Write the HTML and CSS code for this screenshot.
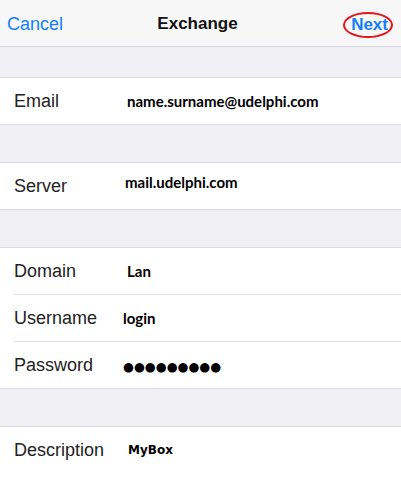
FILE: index.html
```html
<!DOCTYPE html>
<html lang="en">

<head>
  <meta charset="UTF-8">
  <meta name="viewport" content="width=device-width, initial-scale=1.0">
  <title>Exchange</title>
  <link rel="stylesheet" href="styles.css">
</head>

<body>
  <header class="nav-bar">
    <a class="nav-btn nav-cancel">Cancel</a>
    <h1 class="nav-title">Exchange</h1>
    <a class="nav-btn nav-next">Next<span class="mark-ring"></span></a>
  </header>

  <main class="settings">
    <div class="spacer spacer-first"></div>
    <section class="group">
      <div class="field-row">
        <span class="field-label">Email</span>
        <span class="field-value">name.surname@udelphi.com</span>
      </div>
    </section>

    <div class="spacer"></div>
    <section class="group">
      <div class="field-row">
        <span class="field-label">Server</span>
        <span class="field-value raised">mail.udelphi.com</span>
      </div>
    </section>

    <div class="spacer"></div>
    <section class="group">
      <div class="field-row">
        <span class="field-label">Domain</span>
        <span class="field-value">Lan</span>
      </div>
      <div class="field-row">
        <span class="field-label">Username</span>
        <span class="field-value shift-left">login</span>
      </div>
      <div class="field-row">
        <span class="field-label">Password</span>
        <span class="field-value secret shift-left">●●●●●●●●●</span>
      </div>
    </section>

    <div class="spacer"></div>
    <section class="group group-open">
      <div class="field-row">
        <span class="field-label">Description</span>
        <span class="field-value alt-font">MyBox</span>
      </div>
    </section>
  </main>
</body>
</html>
```

FILE: styles.css
```css
* {
  box-sizing: border-box;
}

body {
  margin: 0;
  background: #efeff4;
  font-family: 'Liberation Sans', Arial, sans-serif;
  overflow: hidden;
}

.nav-bar {
  display: grid;
  grid-template-columns: 1fr auto 1fr;
  align-items: center;
  height: 47px;
  padding: 3px 13px 0 7px;
  background: #f7f7f7;
  border-bottom: 1px solid #d6d6da;
}

.nav-btn {
  color: #157efb;
  font-size: 18px;
  cursor: pointer;
}

.nav-next {
  position: relative;
  justify-self: end;
  font-size: 17px;
  font-weight: bold;
}

.mark-ring {
  position: absolute;
  left: 50%;
  top: 50%;
  width: 50px;
  height: 26px;
  margin-left: -2px;
  transform: translate(-50%, -50%);
  border: 2.5px solid #e3141c;
  border-radius: 50%;
}

.nav-title {
  margin: 0 0 1px 0;
  font-size: 17px;
  font-weight: bold;
  color: #111;
}

.spacer {
  height: 37px;
}

.spacer-first {
  height: 30px;
}

.group {
  background: #fff;
  border-top: 1px solid #d9d9de;
  border-bottom: 1px solid #d9d9de;
}

.group-open {
  border-bottom: none;
  padding-bottom: 10px;
}

.field-row {
  display: grid;
  grid-template-columns: 113px 1fr;
  align-items: center;
  height: 46px;
  padding-left: 14px;
}

.field-row + .field-row {
  height: 47px;
  margin-left: 14px;
  padding-left: 0;
  border-top: 1px solid #e0e0e4;
}

.field-label {
  font-size: 18px;
  color: #222;
}

.field-value {
  font-family: Lato, 'Open Sans', sans-serif;
  font-weight: bold;
  font-size: 15px;
  color: #000;
}

.raised {
  margin-top: -8px;
  margin-left: -2px;
}

.shift-left {
  margin-left: -4px;
}

.secret {
  font-family: 'DejaVu Sans', sans-serif;
  font-size: 12.5px;
  letter-spacing: 0;
  margin-top: 3px;
}

.alt-font {
  font-family: 'DejaVu Sans', sans-serif;
  font-size: 12px;
  margin-left: 1px;
}
```
